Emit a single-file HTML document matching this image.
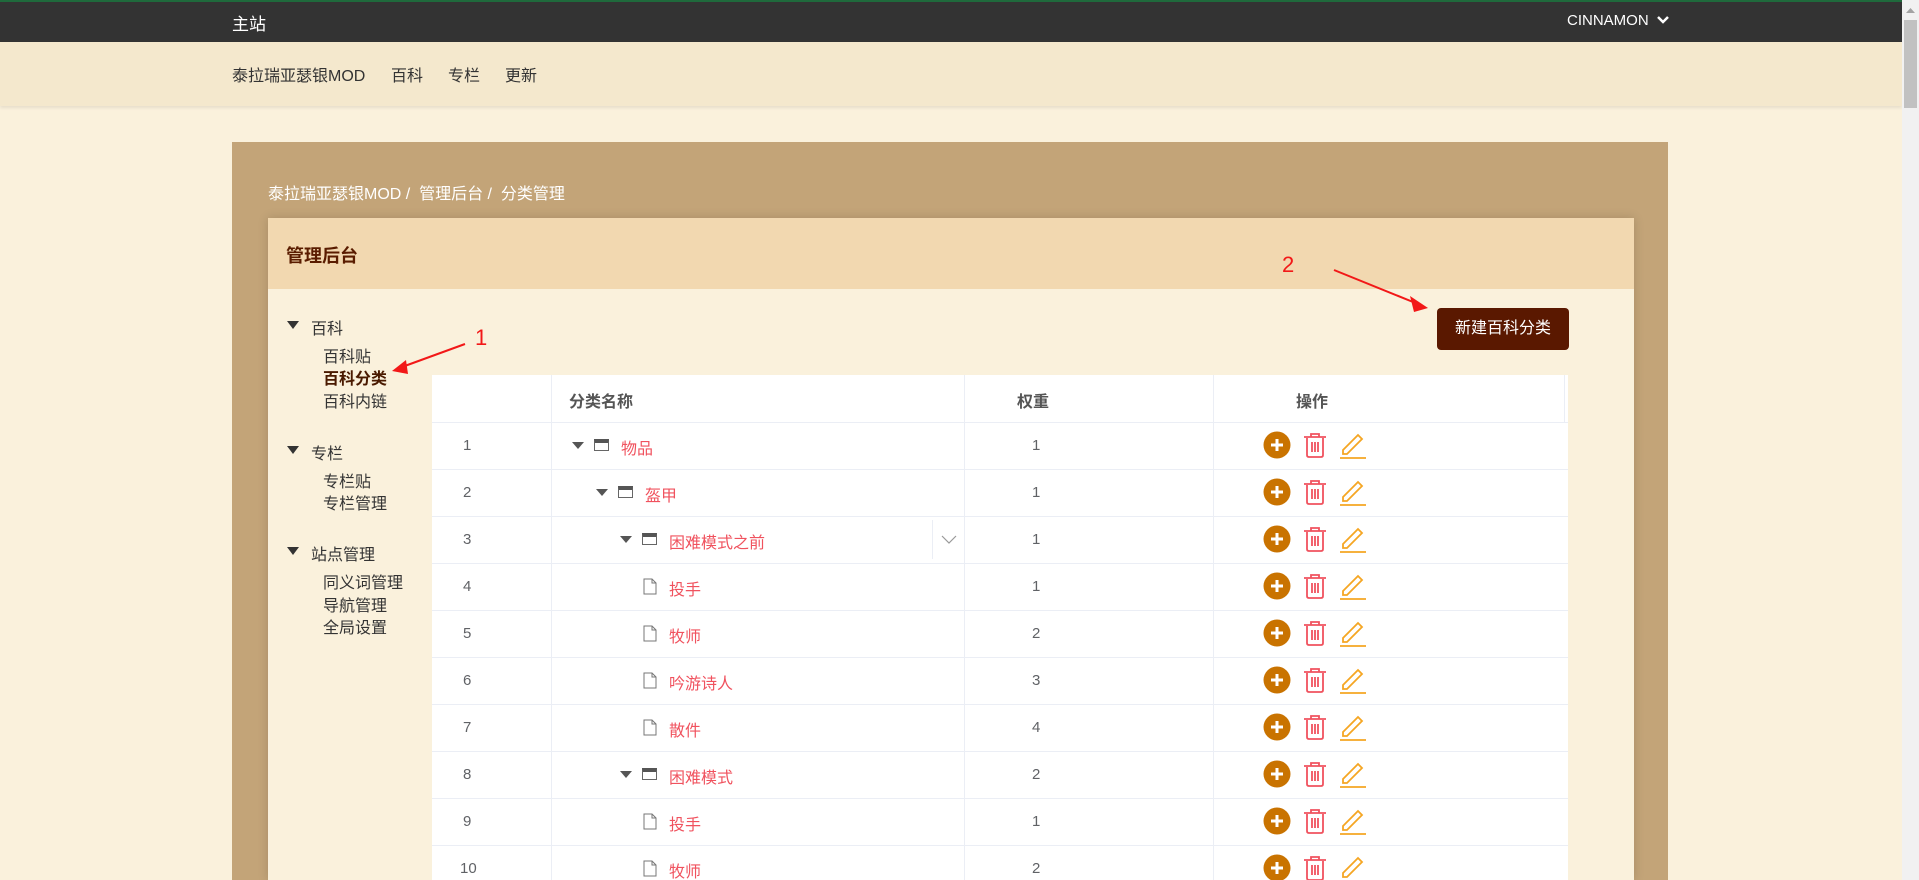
<!DOCTYPE html>
<html><head><meta charset="utf-8"><style>
*{margin:0;padding:0;box-sizing:border-box}
html,body{width:1919px;height:880px;overflow:hidden}
body{background:#faf1dc;font-family:"Liberation Sans","Noto Sans CJK SC",sans-serif;position:relative}
.a{position:absolute;white-space:nowrap}
#top{left:0;top:0;width:1902px;height:42px;background:#333;border-top:2px solid #1f6a3c}
#nav{left:0;top:42px;width:1902px;height:64px;background:#f4e8cd;box-shadow:0 2px 3px rgba(0,0,0,.08)}
#sb{left:1902px;top:0;width:17px;height:880px;background:#f1f1f1}
.nv{font-size:16px;color:#333;top:62px}
#brown{left:232px;top:142px;width:1436px;height:738px;background:#c3a478}
#card{left:268px;top:218px;width:1366px;height:662px;background:#faf1dc;box-shadow:0 0 10px rgba(0,0,0,.15)}
#ch{left:268px;top:218px;width:1366px;height:71px;background:#f2d8b0}
.sd{font-size:16px;color:#333}
.tri{width:0;height:0;border-left:6px solid transparent;border-right:6px solid transparent;border-top:8px solid #333}
#tbl{left:432px;top:375px;width:1136px;height:505px;background:#fff}
.hl{height:1px;background:#ebeef5;left:432px;width:1136px}
.vl{width:1px;background:#ebeef5}
.num{font-size:15px;color:#606266}
.lab{font-size:16px;color:#f0525e}
.th{font-size:16px;font-weight:bold;color:#555;top:388px}
.ttri{width:0;height:0;border-left:6px solid transparent;border-right:6px solid transparent;border-top:7px solid #555}
</style></head><body>
<div class="a" id="top"></div>
<div class="a" style="left:232px;top:10px;color:#fff;font-size:17px">主站</div>
<div class="a" style="left:1567px;top:12px;color:#fff;font-size:15px">CINNAMON</div>
<svg class="a" style="left:1656px;top:14px" width="14" height="12"><path d="M2 3 L7 8 L12 3" stroke="#fff" stroke-width="2.5" fill="none"/></svg>
<div class="a" id="nav"></div>
<div class="a nv" style="left:232px">泰拉瑞亚瑟银MOD</div>
<div class="a nv" style="left:391px">百科</div>
<div class="a nv" style="left:448px">专栏</div>
<div class="a nv" style="left:505px">更新</div>
<div class="a" id="sb"></div>
<div class="a" style="left:1904px;top:20px;width:13px;height:88px;background:#c1c1c1"></div>
<svg class="a" style="left:1904px;top:5px" width="13" height="10"><path d="M2 8 L6.5 3 L11 8Z" fill="#a3a3a3"/></svg>
<div class="a" id="brown"></div>
<div class="a" style="left:268px;top:180px;color:#fff;font-size:16px">泰拉瑞亚瑟银MOD / &nbsp;管理后台 / &nbsp;分类管理</div>
<div class="a" id="card"></div>
<div class="a" id="ch"></div>
<div class="a" style="left:286px;top:242px;color:#5a1c00;font-size:18px;font-weight:bold">管理后台</div>
<div class="a" style="left:1437px;top:308px;width:132px;height:42px;background:#5a1800;border-radius:4px;color:#fff;font-size:16px;text-align:center;line-height:42px">新建百科分类</div>
<div class="a" style="left:1282px;top:252px;color:#f21818;font-size:22px">2</div>
<svg class="a" style="left:0;top:0" width="1919" height="880"><line x1="1334" y1="270" x2="1418" y2="304" stroke="#f21818" stroke-width="2"/><path d="M1428 308 L1410 296 L1414 312Z" fill="#f21818"/><line x1="465" y1="344" x2="402" y2="367" stroke="#f21818" stroke-width="2"/><path d="M392 371 L406 360 L408 374Z" fill="#f21818"/></svg>
<div class="a" style="left:475px;top:325px;color:#f21818;font-size:22px">1</div>
<div class="a tri" style="left:287px;top:321px"></div><div class="a sd" style="left:311px;top:315px">百科</div>
<div class="a sd" style="left:323px;top:343px">百科贴</div>
<div class="a sd" style="left:323px;top:365px;font-weight:bold;color:#4a1a00">百科分类</div>
<div class="a sd" style="left:323px;top:388px">百科内链</div>
<div class="a tri" style="left:287px;top:446px"></div><div class="a sd" style="left:311px;top:440px">专栏</div>
<div class="a sd" style="left:323px;top:468px">专栏贴</div>
<div class="a sd" style="left:323px;top:490px">专栏管理</div>
<div class="a tri" style="left:287px;top:547px"></div><div class="a sd" style="left:311px;top:541px">站点管理</div>
<div class="a sd" style="left:323px;top:569px">同义词管理</div>
<div class="a sd" style="left:323px;top:592px">导航管理</div>
<div class="a sd" style="left:323px;top:614px">全局设置</div>
<div class="a" id="tbl"></div>
<div class="a vl" style="left:551px;top:375px;height:505px"></div>
<div class="a vl" style="left:964px;top:375px;height:505px"></div>
<div class="a vl" style="left:1213px;top:375px;height:505px"></div>
<div class="a vl" style="left:1564px;top:375px;height:47px"></div>
<div class="a th" style="left:569px">分类名称</div>
<div class="a th" style="left:1017px">权重</div>
<div class="a th" style="left:1296px">操作</div>
<div id="rows"></div>
<script>
var d=[[1,'物品',0,1,1],[2,'盔甲',1,1,1],[3,'困难模式之前',2,1,1],[4,'投手',2,0,1],[5,'牧师',2,0,2],[6,'吟游诗人',2,0,3],[7,'散件',2,0,4],[8,'困难模式',2,1,2],[9,'投手',2,0,1],[10,'牧师',2,0,2]];
var h='';
h+='<div class="a hl" style="top:422px"></div>';
d.forEach(function(r,i){var t=422+i*47,c=t+23;
h+='<div class="a hl" style="top:'+(t+47)+'px"></div>';
h+='<div class="a num" style="left:'+(r[0]>9?460:463)+'px;top:'+(c-8)+'px">'+r[0]+'</div>';
var lv=r[2],x=572+lv*24;
if(r[3]){h+='<div class="a ttri" style="left:'+x+'px;top:'+(c-3)+'px"></div>';
h+='<div class="a" style="left:'+(x+22)+'px;top:'+(c-6)+'px;width:15px;height:12px;border:1.5px solid #666;border-top:4px solid #555;background:#fff"></div>';}
else{h+='<svg class="a" style="left:'+(x+23)+'px;top:'+(c-8)+'px" width="14" height="17"><path d="M1 1 H9 L13 5 V16 H1Z M9 1 V5 H13" fill="#fff" stroke="#777" stroke-width="1"/></svg>';}
h+='<div class="a lab" style="left:'+(x+49)+'px;top:'+(c-10)+'px">'+r[1]+'</div>';
h+='<div class="a num" style="left:1032px;top:'+(c-8)+'px">'+r[4]+'</div>';
h+='<svg class="a" style="left:1263px;top:'+(c-14)+'px" width="110" height="28"><circle cx="14" cy="14" r="13.5" fill="#c97300"/><path d="M14 8 V20 M8 14 H20" stroke="#fff" stroke-width="3"/>'+
'<g fill="none" stroke="#f0525e" stroke-width="1.8"><path d="M41 6 H63 M48 6 V3 H56 V6 M44 7 V24 Q44 26 46 26 H58 Q60 26 60 24 V7 M49 11 V21 M52 11 V21 M55 11 V21"/></g>'+
'<g fill="none" stroke="#f5a623" stroke-width="1.8"><path d="M80 19 L95 4 L99 8 L84 23 H80Z"/><path d="M77 27 H103"/></g></svg>';
});
h+='<div class="a vl" style="left:932px;top:520px;height:39px"></div>';
h+='<svg class="a" style="left:941px;top:535px" width="16" height="10"><path d="M1 1 L8 8 L15 1" stroke="#999" stroke-width="1.2" fill="none"/></svg>';
document.getElementById('rows').innerHTML=h;
</script>
</body></html>
